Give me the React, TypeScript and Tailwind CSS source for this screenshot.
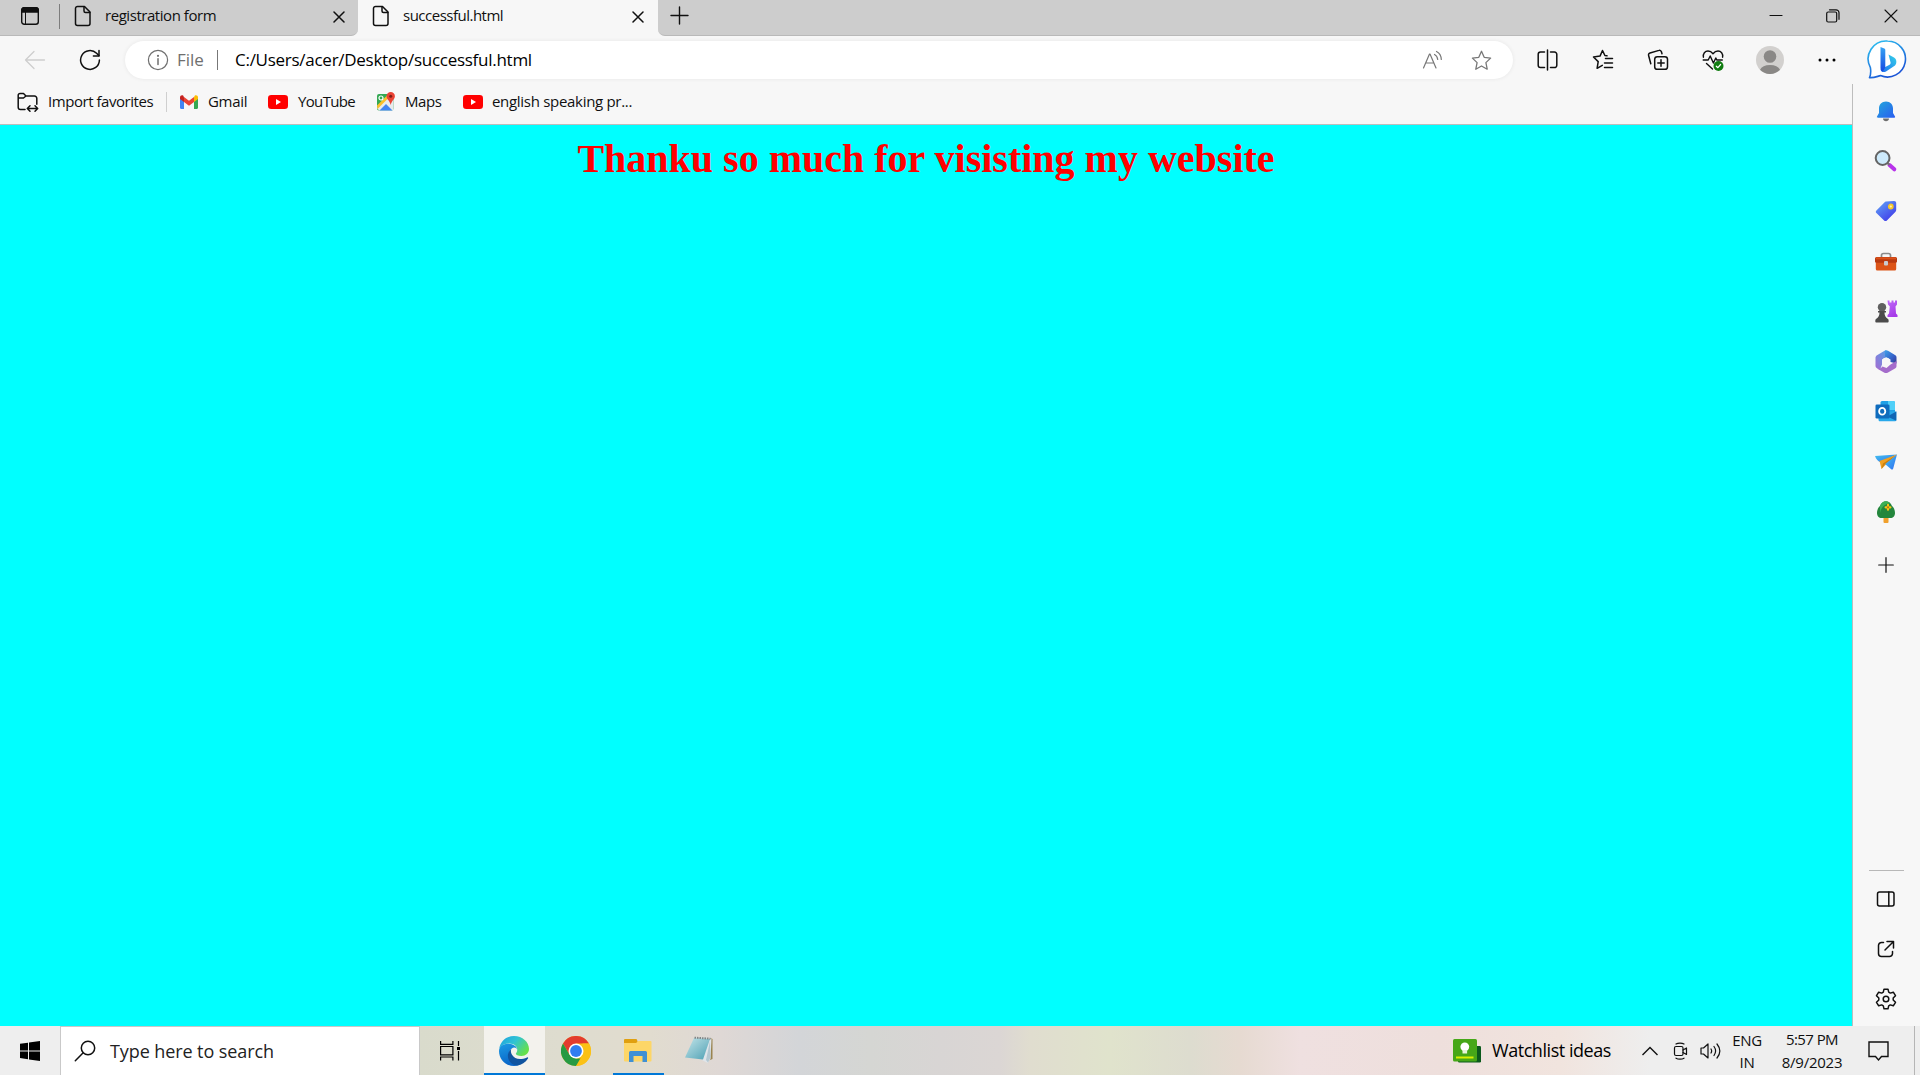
import type { ReactNode } from "react";

type IconProps = { w: number; h: number; className?: string; children: ReactNode; sw?: number };

function Icon({ w, h, className = "", children, sw = 1.3 }: IconProps) {
  return (
    <svg
      width={w}
      height={h}
      viewBox={`0 0 ${w} ${h}`}
      fill="none"
      stroke="currentColor"
      strokeWidth={sw}
      strokeLinecap="round"
      strokeLinejoin="round"
      className={`shrink-0 ${className}`}
    >
      {children}
    </svg>
  );
}

function DocIcon({ className = "" }: { className?: string }) {
  return (
    <Icon w={18} h={22} sw={1.5} className={className}>
      <path d="M3.5 1.5h7l5.5 5.5v11.500a2 2 0 0 1-2 2h-10.500a2 2 0 0 1-2-2v-15a2 2 0 0 1 2-2z" />
      <path d="M10 1.700v4.300a1.500 1.500 0 0 0 1.500 1.500h4.300" />
    </Icon>
  );
}

function CloseIcon({ className = "" }: { className?: string }) {
  return (
    <Icon w={12} h={12} sw={1.5} className={className}>
      <path d="M1 1l10 10M11 1L1 11" />
    </Icon>
  );
}

function TitleBar() {
  return (
    <div className="flex h-9 shrink-0 bg-[#f7f7f7]">
      <div className="flex h-9 w-[358px] rounded-br-[7px] border-b border-[#b9b9b9] bg-[#cdcdcd]">
        <Icon w={20} h={20} sw={1.4} className="mt-1.5 ml-5">
          <rect x="1.7" y="1.7" width="16.600" height="16.600" rx="2.500" />
          <path d="M1.700 6v-2a2.300 2.300 0 0 1 2.300-2.300h12a2.300 2.300 0 0 1 2.300 2.300v2z" fill="currentColor" />
          <path d="M5.500 6v12" strokeWidth="1" />
        </Icon>
        <div className="mt-1 ml-[19px] h-[25px] w-px bg-[#7d7d7d]" />
        <DocIcon className="mt-[5px] ml-[14px]" />
        <span className="mt-[5px] ml-[13px] w-[228px] text-[15px] leading-5 tracking-[-0.45px]">registration form</span>
        <CloseIcon className="mt-[11px]" />
      </div>
      <div className="flex w-[300px] bg-[#f7f7f7]">
        <DocIcon className="mt-[5px] ml-[14px]" />
        <span className="mt-[5px] ml-[13px] w-[229px] text-[15px] leading-5 tracking-[-0.5px]">successful.html</span>
        <CloseIcon className="mt-[11px]" />
      </div>
      <div className="flex h-9 flex-1 rounded-bl-[7px] border-b border-[#b9b9b9] bg-[#cdcdcd]">
        <Icon w={19} h={19} sw={1.4} className="mt-1.5 ml-3">
          <path d="M1 9.500h17M9.500 1v17" />
        </Icon>
        <Icon w={14} h={14} className="mt-[9px] ml-auto" sw={1.2}>
          <path d="M1 6.500h12" />
        </Icon>
        <Icon w={14} h={14} className="mt-[9px] ml-[43px]" sw={1.2}>
          <rect x="0.700" y="3" width="10" height="10" rx="1.500" />
          <path d="M3.500 0.800h6.500a3 3 0 0 1 3 3v6.500" />
        </Icon>
        <Icon w={14} h={14} className="mt-[9px] mr-[22px] ml-11" sw={1.1}>
          <path d="M1 1l12 12M13 1L1 13" />
        </Icon>
      </div>
    </div>
  );
}

function BingIcon() {
  return (
    <svg width="40" height="42" viewBox="0 0 40 42" className="ml-[31px] shrink-0">
      <defs>
        <linearGradient id="bingRing" x1="0" y1="0" x2="0.500" y2="1">
          <stop offset="0" stopColor="#2cc6f2" />
          <stop offset="1" stopColor="#1b55d6" />
        </linearGradient>
        <linearGradient id="bingStem" x1="0" y1="0" x2="0" y2="1">
          <stop offset="0" stopColor="#35a4f4" />
          <stop offset="1" stopColor="#1746e0" />
        </linearGradient>
        <linearGradient id="bingBowl" x1="1" y1="0" x2="0" y2="1">
          <stop offset="0" stopColor="#35d4e8" />
          <stop offset="1" stopColor="#1f6df0" />
        </linearGradient>
      </defs>
      <path
        d="M20.500 2a18 18 0 1 1-7 34.600c-3 .6-6 2.400-11 2 1.500-3 1.500-6 .9-10A18 18 0 0 1 20.500 2z"
        fill="#fff"
        stroke="url(#bingRing)"
        strokeWidth="1.600"
        strokeLinejoin="round"
      />
      <path d="M21.500 15.500l5.500 3c2.700 1.700 3.200 5.500 1 8l-9 6c-2.500 1.200-5 .5-5.500-2l9.500-5 .7-1.500z" fill="url(#bingBowl)" />
      <path d="M13.500 8l3.800 1.600a1.500 1.500 0 0 1 1 1.400v17.500l-2.500 4c-1.500-.5-2.300-2-2.300-3.500z" fill="url(#bingStem)" />
    </svg>
  );
}

const starPath = "M10.500 1.300l2.700 6 6.400.8-4.700 4.500 1.300 6.600-5.700-3.200-5.700 3.200 1.300-6.600-4.700-4.500 6.400-.8z";

function Toolbar() {
  return (
    <div className="flex h-12 shrink-0 items-center bg-[#f7f7f7]">
      <Icon w={22} h={20} className="ml-6 text-[#cecece]">
        <path d="M20.500 10h-19M10 1.500L1.500 10l8.500 8.500" />
      </Icon>
      <Icon w={22} h={22} className="ml-[33px]" sw={1.5}>
        <path d="M20.400 11a9.400 9.400 0 1 1-2.800-6.700l2.300 2.300" />
        <path d="M20 1.500v5.400h-5.600" />
      </Icon>
      <div className="ml-6 flex h-[38px] w-[1388px] items-center rounded-full bg-white text-[17px] shadow-[0_0_4px_rgba(0,0,0,0.07)]">
        <Icon w={22} h={22} className="ml-[22px] text-[#6f6f6f]" sw={1.2}>
          <circle cx="11" cy="11" r="9.600" />
          <path d="M11 9.800v5.700" strokeWidth="1.500" />
          <circle cx="11" cy="6.800" r="0.500" fill="currentColor" />
        </Icon>
        <span className="ml-2 w-[40px] text-[#6f6f6f]">File</span>
        <div className="h-5 w-px bg-[#777]" />
        <span className="ml-[17px] w-[1187px] tracking-[-0.27px] text-black">C:/Users/acer/Desktop/successful.html</span>
        <Icon w={22} h={20} className="text-[#777]" sw={1.2}>
          <path d="M1.500 18L7.500 4h.5l6 14M3.700 13h8M12.500 4.500c2 1 3 2.800 3.200 5M14.500 1.500c3 1.500 4.700 4.500 4.800 8" />
        </Icon>
        <Icon w={21} h={20} className="ml-[27px] text-[#777]" sw={1.3}>
          <path d={starPath} />
        </Icon>
      </div>
      <Icon w={21} h={22} className="ml-6" sw={1.5}>
        <path d="M7.500 3h-4a2.300 2.300 0 0 0-2.300 2.300v11a2.300 2.300 0 0 0 2.300 2.300h4M13.500 3h4a2.300 2.300 0 0 1 2.300 2.300v11a2.300 2.300 0 0 1-2.300 2.300h-4M10.500 1v20" />
      </Icon>
      <Icon w={22} h={22} className="ml-[34px]" sw={1.5}>
        <path d="M15 6.800l-2.100-.3L10.500 1.500 8 7.100l-6.500.9 4.700 4.600-1.100 6.700 5.200-3M13.500 9.500h7M12.500 14h8M12.500 18.500h8" />
      </Icon>
      <Icon w={22} h={22} className="ml-[33px]" sw={1.5}>
        <rect x="7.700" y="7.700" width="12.800" height="12.600" rx="2.600" />
        <path d="M14 10.800v6.400M10.800 14h6.400M15 4.700l-.6-2a1.900 1.900 0 0 0-2.400-1.300L3 4a2 2 0 0 0-1.400 2.500l2.200 8.200" />
      </Icon>
      <Icon w={22} h={22} className="ml-[33px]" sw={1.4}>
        <path d="M1.400 8.200C.8 4.600 3 2 6 2c2.300 0 3.800 1.200 5 2.700C12.200 3.200 13.700 2 16 2c3 0 5.200 2.600 4.600 6.200M1.200 11h5l2-4 3.200 7 2.400-5 1 2h5.500M4.500 14.500l6 5.500" />
        <circle cx="16.500" cy="17" r="5" fill="#107c10" stroke="none" />
        <path d="M14.300 17.200l1.600 1.500 2.700-3.200" stroke="#fff" strokeWidth="1.200" />
      </Icon>
      <svg width="28" height="28" viewBox="0 0 28 28" className="ml-8 shrink-0">
        <circle cx="14" cy="14" r="14" fill="#d2d0ce" />
        <circle cx="14" cy="10.500" r="6.300" fill="#8a8886" />
        <path d="M4 23.800a10.500 7 0 0 1 20 0A14 14 0 0 1 4 23.800z" fill="#8a8886" />
      </svg>
      <svg width="18" height="4" viewBox="0 0 18 4" className="ml-[34px] shrink-0">
        <circle cx="2" cy="2" r="1.500" />
        <circle cx="9" cy="2" r="1.500" />
        <circle cx="16" cy="2" r="1.500" />
      </svg>
      <BingIcon />
    </div>
  );
}

function YouTubeIcon({ className = "" }: { className?: string }) {
  return (
    <svg width="20" height="14" viewBox="0 0 20 14" className={`shrink-0 ${className}`}>
      <rect width="20" height="14" rx="3.300" fill="#f00" />
      <path d="M8 4v6l5-3z" fill="#fff" />
    </svg>
  );
}

function FavoritesBar() {
  return (
    <div className="flex h-[41px] shrink-0 items-center border-b border-[#bdbdbd] bg-[#f7f7f7] pb-1 text-[15px]">
      <Icon w={22} h={21} className="ml-[17px]" sw={1.5}>
        <path d="M8 17.500H3.500a2.300 2.300 0 0 1-2.300-2.300V3.300A1.800 1.800 0 0 1 3 1.500h3.500L9 4h8.500a2.300 2.300 0 0 1 2.300 2.300v6M1.200 6h5.300L9 4M10.500 16.500h10M13 13.800l-2.700 2.700 2.700 2.700M18 13.800l2.700 2.700-2.700 2.700" />
      </Icon>
      <span className="mb-0.5 ml-[9px] w-[118px] tracking-[-0.45px]">Import favorites</span>
      <div className="h-5 w-px bg-[#cfcfcf]" />
      <svg width="18" height="14" viewBox="0 0 18 14" className="ml-[13px] shrink-0">
        <path d="M0 3v9.800c0 .7.500 1.200 1.200 1.200H4V6z" fill="#4285f4" />
        <path d="M14 6v8h2.800c.7 0 1.200-.5 1.200-1.200V3z" fill="#34a853" />
        <path d="M14 2.200V7l4-3V2.400c0-2-2-2.700-3.300-1.700z" fill="#fbbc04" />
        <path d="M4 7V2l5 3.700L14 2v5l-5 3.800z" fill="#ea4335" />
        <path d="M0 2.400V4l4 3V2.200L3.300.7C2-.3 0 .4 0 2.400z" fill="#c5221f" />
      </svg>
      <span className="mb-0.5 ml-[10px] w-[60px] tracking-[-0.3px]">Gmail</span>
      <YouTubeIcon />
      <span className="mb-0.5 ml-[10px] w-[78px] tracking-[-0.65px]">YouTube</span>
      <svg width="20" height="20" viewBox="0 0 20 20" className="shrink-0">
        <rect x="1" y="2" width="16.500" height="16.500" rx="2" fill="#34a853" />
        <path d="M1 16L13 4l4.500 3v9.500a2 2 0 0 1-2 2H3z" fill="#e8eaed" />
        <path d="M3.500 18.500l6.500-6.500 6.500 6.500z" fill="#4285f4" />
        <path d="M1 13.500L12.500 2l2 2L1.500 17z" fill="#fbc02d" />
        <circle cx="5" cy="6" r="2" fill="none" stroke="#fff" strokeWidth="1.200" />
        <path d="M14.700 0a4.200 4.200 0 0 1 4.200 4.200c0 3-3.300 4.300-4.200 8.800-.9-4.500-4.200-5.800-4.200-8.800A4.200 4.200 0 0 1 14.700 0z" fill="#ea4335" />
        <circle cx="14.700" cy="4.200" r="1.500" fill="#7d1d15" />
      </svg>
      <span className="mb-0.5 ml-[9px] w-[58px] tracking-[-0.4px]">Maps</span>
      <YouTubeIcon />
      <span className="mb-0.5 ml-[9px] tracking-[-0.3px]">english speaking pr...</span>
    </div>
  );
}

function Slot({ children }: { children: ReactNode }) {
  return <div className="flex h-[50.100px] w-full shrink-0 items-center justify-center">{children}</div>;
}

function Sidebar() {
  return (
    <div className="flex w-[68px] shrink-0 flex-col items-center border-l border-[#bdbdbd] bg-[#f7f7f7] pt-0.5 pr-px">
      <Slot>
        <svg width="24" height="24" viewBox="0 0 24 24">
          <defs>
            <linearGradient id="bell" x1="0" y1="0" x2="1" y2="1">
              <stop offset="0" stopColor="#22a8dc" />
              <stop offset="1" stopColor="#2a5cf0" />
            </linearGradient>
          </defs>
          <path d="M9 19.500h6c0 1.700-1.500 2.700-3 2.700s-3-1-3-2.700z" fill="#6e6e6e" />
          <path d="M12 2.500c4.300 0 7 3 7 7v4.500l2 3.500c.3.800 0 1.200-.7 1.200H3.700c-.7 0-1-.4-.7-1.200L5 14V9.500c0-4 2.700-7 7-7z" fill="url(#bell)" />
        </svg>
      </Slot>
      <Slot>
        <svg width="24" height="24" viewBox="0 0 24 24">
          <path d="M15.500 16l4.800 4.300" stroke="#b833ea" strokeWidth="4" strokeLinecap="round" />
          <path d="M13.500 14l2 2" stroke="#777" strokeWidth="2" />
          <circle cx="8.600" cy="9" r="6.900" fill="#cdeafb" stroke="#646464" strokeWidth="2" />
        </svg>
      </Slot>
      <Slot>
        <svg width="24" height="24" viewBox="0 0 24 24">
          <defs>
            <linearGradient id="tag" x1="0" y1="0" x2="0.800" y2="1">
              <stop offset="0" stopColor="#62a8f8" />
              <stop offset="1" stopColor="#4038e8" />
            </linearGradient>
          </defs>
          <path d="M12 2.500l8-.5c1.500 0 2.200.8 2.200 2V11c0 .8-.3 1.400-.9 2l-8.400 8.400c-.8.800-2 .8-2.800 0l-7.700-7.300c-.8-.8-.8-1.900 0-2.700l8-8c.4-.5.900-.8 1.600-.9z" fill="url(#tag)" />
          <circle cx="16.800" cy="7.500" r="2" fill="#fff3b0" stroke="#f6c62b" strokeWidth="1.800" />
        </svg>
      </Slot>
      <Slot>
        <svg width="24" height="24" viewBox="0 0 24 24">
          <path d="M7.500 8.500V6.300C7.500 5 8.300 4.500 9.500 4.500h5c1.200 0 2 .5 2 1.800V8.500" fill="none" stroke="#8b8b8b" strokeWidth="1.700" />
          <rect x="1.800" y="12.500" width="20.400" height="9" rx="1.500" fill="#dc5417" />
          <path d="M1 9.500A1.500 1.500 0 0 1 2.500 8h19A1.500 1.500 0 0 1 23 9.500v3c0 .8-.7 1.300-1.500 1.300h-19c-.8 0-1.500-.5-1.500-1.300z" fill="#b83a10" />
          <path d="M2 8.300h20v2H2z" fill="#d9501a" />
          <rect x="10" y="12" width="4" height="4.500" rx="1" fill="#c9cbd0" />
        </svg>
      </Slot>
      <Slot>
        <svg width="24" height="24" viewBox="0 0 24 24">
          <defs>
            <linearGradient id="rook" x1="0" y1="0" x2="0.500" y2="1">
              <stop offset="0" stopColor="#c06af8" />
              <stop offset="1" stopColor="#a63be8" />
            </linearGradient>
          </defs>
          <path d="M13.500 1.500h2v2h2v-2h2v2h1.500v-2h2v4l-1.500 2 .5 7 1.500 1.500V18h-10v-2l1.500-1.500.8-7-1.800-2z" fill="url(#rook)" />
          <circle cx="8" cy="8.300" r="4.200" fill="#5f5f5f" />
          <path d="M4 12h8v1.500h-1.500c0 3 1 4.700 3.500 6.500.8.600 1 3.500 0 3.500H2c-1 0-.8-2.900 0-3.500 2.500-1.800 3.500-3.500 3.500-6.500H4z" fill="#4c4c4c" />
        </svg>
      </Slot>
      <Slot>
        <svg width="24" height="24" viewBox="0 0 24 24">
          <defs>
            <linearGradient id="mA" x1="1" y1="0" x2="0" y2="1">
              <stop offset="0" stopColor="#4fa3e8" />
              <stop offset="1" stopColor="#a56bd2" />
            </linearGradient>
            <linearGradient id="mB" x1="0" y1="0" x2="1" y2="1">
              <stop offset="0" stopColor="#3fa0e8" />
              <stop offset="0.600" stopColor="#3460c8" />
              <stop offset="1" stopColor="#34368c" />
            </linearGradient>
          </defs>
          <path d="M11 .5L3 5.200C2 5.800 1.500 6.800 1.500 7.800v8c0 1 .5 2 1.500 2.500L6 19.800l2-5.300V9.500l6-3V1.500z" fill="url(#mA)" />
          <path d="M11 .5c1-.5 2-.4 3 .2l7 4.300c1 .6 1.500 1.500 1.500 2.500v6l-6-1.500V9.500L11 6.500z" fill="url(#mB)" />
          <path d="M22.500 11v5c0 1-.5 2-1.500 2.500l-7 4c-1.300.7-2.700.7-4 0L3 18.600c3 .4 4.500-.6 5.500-2l4 1.400 4-3.500z" fill="#a46ccb" />
          <circle cx="12" cy="11.700" r="4" fill="#f7f7f7" />
        </svg>
      </Slot>
      <Slot>
        <svg width="24" height="24" viewBox="0 0 24 24">
          <rect x="6.500" y="1" width="14.500" height="18" rx="1.500" fill="#1fa0e6" />
          <path d="M14 1h5.500A1.500 1.500 0 0 1 21 2.500V10h-7z" fill="#50d0f8" />
          <path d="M4.500 11.500h17.800v8.200c0 .9-.6 1.500-1.500 1.500h-15c-.8 0-1.300-.6-1.300-1.500z" fill="#28a8ea" />
          <path d="M22.300 11.500l-9 5 9 4.300z" fill="#0f64b4" />
          <rect x="1.500" y="4.500" width="14" height="14" rx="1.300" fill="#0f6cbd" />
          <ellipse cx="8.200" cy="11.300" rx="3.100" ry="3.400" fill="none" stroke="#fff" strokeWidth="1.800" />
        </svg>
      </Slot>
      <Slot>
        <svg width="24" height="24" viewBox="0 0 24 24">
          <defs>
            <linearGradient id="plane" x1="0" y1="0" x2="1" y2="1">
              <stop offset="0" stopColor="#45c4ee" />
              <stop offset="1" stopColor="#2f6df2" />
            </linearGradient>
          </defs>
          <path d="M1 6l22-1.500L7 12.500c-3-1-5-3.500-6-6.500z" fill="url(#plane)" />
          <path d="M23 4.500L5.500 11l2 8 5-5z" fill="#f0a020" />
          <path d="M23 4.500L11 14l6.500 5.500c1 .3 1.500-.3 1.700-1z" fill="url(#plane)" />
          <path d="M7.500 19l1.500-5.500L23 4.500 11 14z" fill="#c57d12" />
        </svg>
      </Slot>
      <Slot>
        <svg width="24" height="24" viewBox="0 0 24 24">
          <rect x="9.500" y="16" width="5" height="7" rx="1" fill="#f0a02c" />
          <path d="M12 1.200c2.500 0 5 2 6 4.800 2 1.500 3 4.500 3 7 0 3-2 5-4.500 5h-9C5 18 3 16 3 13c0-2.500 1-5.500 3-7 1-2.800 3.500-4.800 6-4.800z" fill="#23863c" />
          <path d="M6 6c1-2.800 3.500-4.800 6-4.800 1.500 0 3 1 4 2C10 4 7 8 6 13z" fill="#3cb054" />
          <path d="M14 4.900v4.800M11.600 7.300h4.800" stroke="#f5c518" strokeWidth="2.200" strokeLinecap="round" />
          <circle cx="14" cy="7.300" r="1.100" fill="#c86b0a" />
        </svg>
      </Slot>
      <div className="mt-[3px] flex h-[50px] items-center pr-px">
        <Icon w={16} h={16} sw={1.2}>
          <path d="M0.700 8h14.600M8 0.700v14.600" />
        </Icon>
      </div>
      <div className="mt-auto h-px w-[35px] bg-[#b8b8b8]" />
      <div className="mt-[3px] mb-[2px] flex w-full flex-col items-center">
        <Slot>
          <Icon w={20} h={18} sw={1.5}>
            <rect x="1.500" y="2" width="16.500" height="14" rx="2" />
            <path d="M12.800 2v14" />
          </Icon>
        </Slot>
        <Slot>
          <Icon w={18} h={18} sw={1.5}>
            <path d="M6.500 2.500h-2a3 3 0 0 0-3 3v8a3 3 0 0 0 3 3h8a3 3 0 0 0 3-3v-2M10 1.500h6.500V8M16.300 1.700L8 10" />
          </Icon>
        </Slot>
        <Slot>
          <Icon w={22} h={22} sw={1.5}>
            <path d="M9 1.200h4l.7 3 1.600.9 3-.9 2.200 3.500-2.300 2.300v2l2.300 2.300-2.200 3.500-3-.9-1.600.9-.7 3H9l-.7-3-1.600-.9-3 .9-2.200-3.500L3.800 12v-2L1.500 7.700l2.200-3.500 3 .9 1.600-.9z" />
            <circle cx="11" cy="11" r="2.800" />
          </Icon>
        </Slot>
      </div>
    </div>
  );
}

function Taskbar() {
  return (
    <div className="flex h-[49px] shrink-0 bg-[linear-gradient(90deg,#eee_0px,#eee_60px,#d9dbcc_420px,#dedccf_560px,#e1dccf_650px,#dfd8d5_720px,#d3d5d8_800px,#d5d6d3_870px,#d8d5d4_940px,#dbd6d4_1000px,#e0ddcf_1030px,#e0e3cc_1110px,#dddccf_1190px,#e6dad1_1240px,#efe0e0_1300px,#eedfdc_1440px,#f1e4de_1560px,#eee_1650px,#eee_1920px)]">
      <div className="flex w-[60px] items-center justify-center">
        <svg width="20" height="20" viewBox="0 0 20 20">
          <path d="M0 2.800l8-1.100v7.700H0zM9 1.500L20 0v9.400H9zM0 10.400h8v7.800l-8-1.100zM9 10.400h11V20L9 18.400z" />
        </svg>
      </div>
      <div className="flex w-[360px] items-center border border-b-0 border-[#c9c9c9] bg-white">
        <Icon w={22} h={22} className="ml-[13px]" sw={1.5}>
          <circle cx="14" cy="8" r="6.700" />
          <path d="M9.200 12.800L1.300 20.700" />
        </Icon>
        <span className="ml-[14px] text-[18px] tracking-[-0.09px] text-[#222]">Type here to search</span>
      </div>
      <svg width="22" height="22" viewBox="0 0 22 22" fill="none" stroke="#000" strokeWidth="1.200" className="mt-[14px] ml-5 shrink-0">
        <path d="M.6 1v3.400h12.300V1M.6 6.500h12.300v8.300H.6zM.6 20.500V17h12.300v3.500M18.500 1v5M18.500 11v9.500" />
        <path d="M17 7h3v3h-3z" fill="#000" stroke="none" />
      </svg>
      <div className="ml-[22px] flex w-[61px] border-b-2 border-[#0078d7] bg-[#f3f2ed] pt-[10px] pl-[15px]">
        <svg width="30" height="30" viewBox="0 0 30 30">
          <defs>
            <linearGradient id="edgeTop" x1="0" y1="0" x2="1" y2="0.600">
              <stop offset="0" stopColor="#1e9fe0" />
              <stop offset="0.500" stopColor="#2fc3d4" />
              <stop offset="1" stopColor="#66e04a" />
            </linearGradient>
            <linearGradient id="edgeLeft" x1="0" y1="0" x2="0.300" y2="1">
              <stop offset="0" stopColor="#1c9be4" />
              <stop offset="1" stopColor="#0a66c8" />
            </linearGradient>
          </defs>
          <path d="M.3 12.500C1.500 5 7.500 0 15 0c8.500 0 15 6 15 13 0 4-3.300 7-7.500 7-3.500 0-5.700-1-5.700-2.200 0-.8 1.500-1.500 1.500-4 0-3.500-3.500-6.300-8-6.300C6 7.500 2.500 9.300.3 12.500z" fill="url(#edgeTop)" />
          <path d="M0 15C0 10 4.500 7.800 9.500 7.800c5 0 8.800 3.200 8.800 6-1-2.500-3.500-3-5.800-1-3.500 2.500-3.500 9 .5 13 2 2 5 3.500 7 3.300-1.600.6-3.300.9-5 .9C6.700 30 0 23.500 0 15z" fill="url(#edgeLeft)" />
          <path d="M12.500 12.800c-1 1.200-.8 4 .5 6 2.500 4.500 8.500 5.500 15 2.700.8-.4 1.500.2 1 1C26.500 26.500 22.500 29 18.500 29.500c-6.500 0-10.500-6-9.500-11.300.5-2.500 2-4.300 3.500-5.400z" fill="#1054a0" />
        </svg>
      </div>
      <svg width="30" height="30" viewBox="0 0 30 30" className="mt-[10px] ml-4 shrink-0">
        <circle cx="15" cy="15" r="15" fill="#fbc116" />
        <path d="M2 7.500A15 15 0 0 1 28 7.500H15L8.500 18.800z" fill="#e33b2e" />
        <path d="M2 7.500l6.500 11.300L15 22.500h6.500L15 30A15 15 0 0 1 2 7.500z" fill="#269a43" />
        <path d="M28 7.500A15 15 0 0 1 15 30l6.500-11.300V7.500z" fill="#fbc116" />
        <circle cx="15" cy="15" r="7.500" fill="#fff" />
        <circle cx="15" cy="15" r="5.900" fill="#2f7df0" />
      </svg>
      <div className="ml-[22px] flex w-[51px] border-b-2 border-[#0078d7] pt-[13px]">
        <svg width="28" height="24" viewBox="0 0 28 24" className="ml-[11px]">
          <path d="M0 4V1a1 1 0 0 1 1-1h11a1 1 0 0 1 1 .8L14 4z" fill="#e0a010" />
          <path d="M0 4h12l2.500-2H26.500a1 1 0 0 1 1 1v18.500a1 1 0 0 1-1 1H1a1 1 0 0 1-1-1z" fill="#fdd667" />
          <path d="M5 23v-9.500A1.500 1.500 0 0 1 6.500 12h15a1.500 1.500 0 0 1 1.500 1.500V23h-4.500v-6h-9v6z" fill="#3f90d4" />
        </svg>
      </div>
      <svg width="31" height="30" viewBox="0 0 31 30" className="mt-[9px] ml-5 shrink-0">
        <defs>
          <linearGradient id="pad" x1="0" y1="0" x2="1" y2="1">
            <stop offset="0" stopColor="#c5e6ea" />
            <stop offset="1" stopColor="#4c9fb3" />
          </linearGradient>
        </defs>
        <path d="M26 3l2.500 1v20l-5 2z" fill="#9a8450" />
        <path d="M25 3l2.500 1-1 20-3 4L18 25z" fill="#dfe5ea" />
        <path d="M10 3l16 1-7 20.500L1 22.500z" fill="url(#pad)" />
        <path d="M10.500 2.700l16 1" stroke="#7f8688" strokeWidth="2" strokeDasharray="1.500 1" />
        <path d="M26 6l-4 19 2 2.500 2.500-5z" fill="#b4c8d2" />
      </svg>
      <div className="ml-auto flex items-center">
        <svg width="28" height="24" viewBox="0 0 28 24" className="shrink-0">
          <rect x="5" y="7" width="23" height="16.500" rx="1.200" fill="#0b5a1c" />
          <rect width="24" height="22.500" rx="1.500" fill="#46a718" />
          <rect x="3" y="17.500" width="17.500" height="2" fill="#d8f000" />
          <circle cx="11.800" cy="7.800" r="4.400" fill="#fff" />
          <path d="M9.500 11h4.600v3.500H9.500z" fill="#e8f3d8" />
        </svg>
        <span className="ml-[11px] w-[149px] text-[18px] tracking-[-0.45px] text-black">Watchlist ideas</span>
        <Icon w={18} h={10} sw={1.400}>
          <path d="M1.500 9L9 1.500 16.500 9" strokeLinecap="butt" strokeLinejoin="miter" />
        </Icon>
        <Icon w={16} h={18} className="ml-3.5" sw={1.200}>
          <rect x="1.500" y="4.500" width="8.500" height="9" rx="1.500" />
          <path d="M10 8l3.500-2v6.500L10 10.500M3 2c2-1.300 6-1.300 8 0M3 16.200c2 1.300 6 1.300 8 0" />
        </Icon>
        <Icon w={22} h={18} className="ml-[11px]" sw={1.200}>
          <path d="M1 6h2.500L8 2v14l-4.500-4H1zM11 7c.8 1.300.8 2.800 0 4M14 4.500c2 2.800 2 6.200 0 9M17 2c3.500 4.300 3.500 9.700 0 14" />
        </Icon>
        <div className="ml-[9px] flex w-8 flex-col items-center text-[15px] leading-[22px]">
          <span className="tracking-[-0.35px]">ENG</span>
          <span className="tracking-[-0.25px]">IN</span>
        </div>
        <div className="ml-[17px] flex w-[64px] flex-col items-center text-[15px] leading-[23px]">
          <span className="tracking-[-0.58px]">5:57 PM</span>
          <span className="tracking-[-0.25px]">8/9/2023</span>
        </div>
        <Icon w={21} h={21} className="ml-6 mt-0.5" sw={1.400}>
          <path d="M1 1h19v14.500h-6.500L10.500 19l-3-3.500H1z" strokeLinejoin="miter" />
        </Icon>
        <div className="mr-[5px] ml-[25px] h-[49px] w-px bg-[#b5b5b5]" />
      </div>
    </div>
  );
}

export default function App() {
  return (
    <div className="flex h-[1075px] w-[1920px] flex-col overflow-hidden bg-[#f7f7f7] font-['Open_Sans',sans-serif] whitespace-nowrap text-[#101010]">
      <TitleBar />
      <Toolbar />
      <div className="flex min-h-0 flex-1">
        <div className="flex w-[1852px] flex-col">
          <FavoritesBar />
          <main className="flex-1 bg-[#00ffff] pt-[11px]">
            <h1 className="text-center font-['Liberation_Serif',serif] text-[40px] leading-[46px] font-bold text-[#ff0000]">
              Thanku so much for visisting my website
            </h1>
          </main>
        </div>
        <Sidebar />
      </div>
      <Taskbar />
    </div>
  );
}
